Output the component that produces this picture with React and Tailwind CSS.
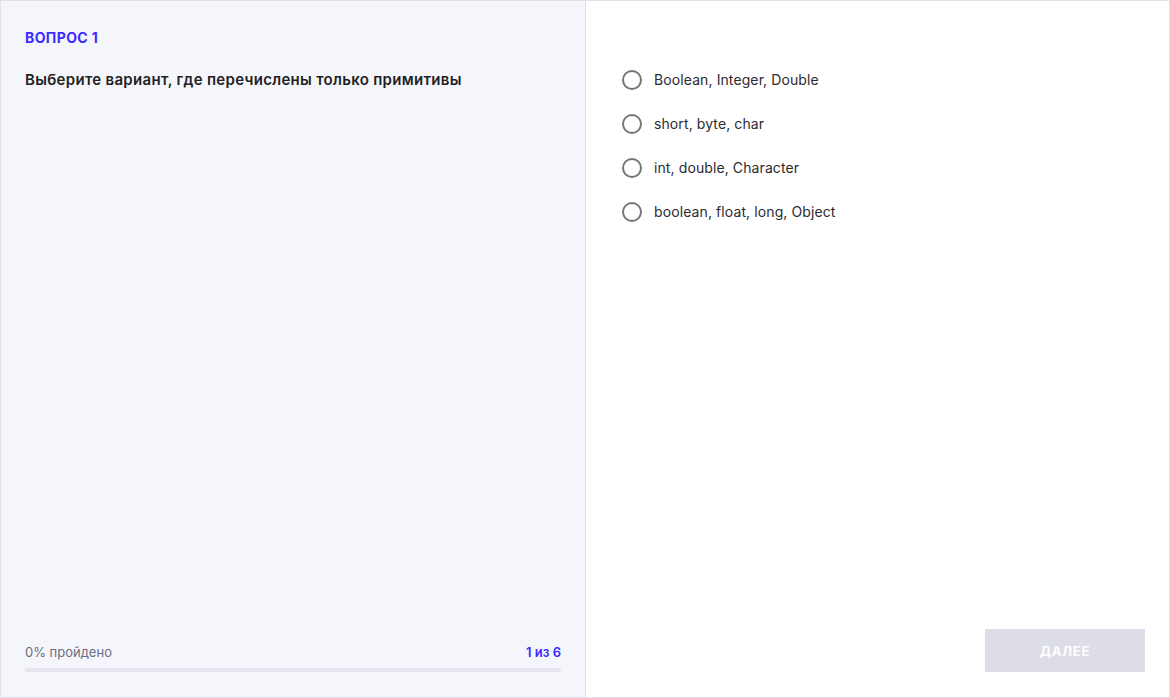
import React, { useState } from 'react';

const options = [
  'Boolean, Integer, Double',
  'short, byte, char',
  'int, double, Character',
  'boolean, float, long, Object',
];

export default function App() {
  const [picked, setPicked] = useState(null);

  return (
    <div
      className="h-[698px] w-[1170px] flex border border-[#dfe0e8] bg-white text-[#222]"
      style={{ fontFamily: 'Inter, "Noto Sans", sans-serif' }}
    >
      <div className="w-[585px] shrink-0 bg-[#f5f6fb] border-r border-[#dfe0e8] flex flex-col px-6 pt-[27px] pb-[25px]">
        <div className="text-[14px] leading-5 font-bold text-[#3b2bff] tracking-[0.4px]">ВОПРОС 1</div>
        <h1 className="mt-[22px] text-[15px] font-semibold text-[#1f1f24] leading-5 tracking-[0.3px]">
          Выберите вариант, где перечислены только примитивы
        </h1>
        <div className="mt-auto">
          <div className="flex justify-between text-[13px] leading-4">
            <span className="text-[#6b6d80]">0% пройдено</span>
            <span className="font-semibold text-[#3b2bff]">1 из 6</span>
          </div>
          <div className="mt-[8px] h-[4px] w-full rounded-full bg-[#e4e5ee]" />
        </div>
      </div>

      <div className="flex-1 flex flex-col pl-[36px] pr-6 pt-[69px] pb-[25px]">
        <div className="flex flex-col gap-[24px]">
          {options.map((o, i) => (
            <label key={o} className="flex items-center gap-[12px] cursor-pointer" onClick={() => setPicked(i)}>
              <span className="w-[20px] h-[20px] rounded-full border-2 border-[#767676] flex items-center justify-center">
                {picked === i && <span className="w-[10px] h-[10px] rounded-full bg-[#3b2bff]" />}
              </span>
              <span className="text-[14px] leading-5 text-[#2b2b30] tracking-[0.1px]">{o}</span>
            </label>
          ))}
        </div>
        <div className="mt-auto flex justify-end">
          <button
            disabled={picked === null}
            className="w-[160px] h-[43px] pt-[3px] bg-[#dcdde6] text-white text-[13px] font-bold tracking-[0.8px] disabled:cursor-not-allowed"
          >
            ДАЛЕЕ
          </button>
        </div>
      </div>
    </div>
  );
}
